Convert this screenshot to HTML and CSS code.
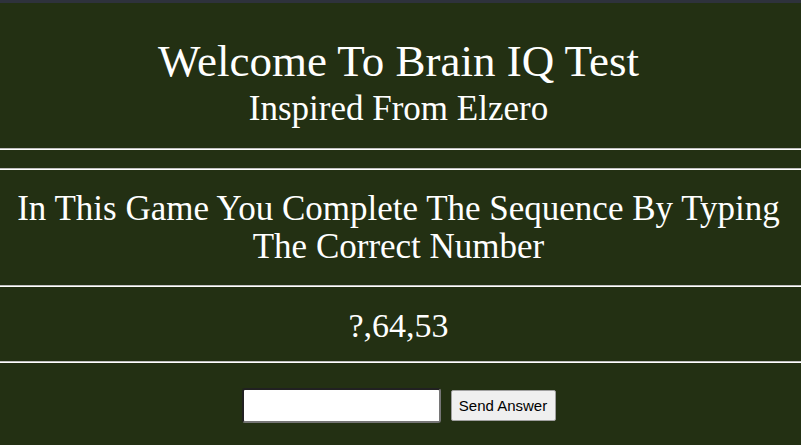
FILE: index.html
```html
<!DOCTYPE html>
<html>
<head>
<meta charset="utf-8">
<title>Brain IQ Test</title>
<link rel="stylesheet" href="styles.css">
</head>
<body>
<div class="page">
  <header class="head">
    <h1 class="title">Welcome To Brain IQ Test</h1>
    <p class="subtitle">Inspired From Elzero</p>
  </header>
  <div class="spacer"></div>
  <section class="intro">
    <p>In This Game You Complete The Sequence By Typing The Correct Number</p>
  </section>
  <section class="seq">
    <p>?,64,53</p>
  </section>
  <form class="answer">
    <input class="field" type="text">
    <button class="send" type="button">Send Answer</button>
  </form>
</div>
</body>
</html>
```
FILE: styles.css
```css
html, body {
  margin: 0;
  padding: 0;
}
body {
  background: #233013;
  border-top: 3px solid #2e323c;
  font-family: "Liberation Serif", "Times New Roman", serif;
  color: #fff;
}
.page {
  text-align: center;
}
.head, .spacer, .intro, .seq {
  border-bottom: 1px solid #fff;
  box-shadow: 0 -1px 0 #bfbfbf inset;
}
.head {
  padding: 33px 4px 20px 0;
}
.title {
  margin: 0;
  font-size: 45px;
  font-weight: normal;
  line-height: 51px;
}
.subtitle {
  margin: 2px 0 0;
  font-size: 35px;
  line-height: 40px;
}
.spacer {
  height: 19px;
}
.intro {
  padding: 20px 12px 20px 8px;
}
.intro p {
  margin: 0;
  font-size: 35px;
  line-height: 38px;
}
.seq {
  padding: 19px 4px 16px 0;
}
.seq p {
  margin: 0;
  font-size: 34px;
  line-height: 40px;
}
.answer {
  display: flex;
  justify-content: center;
  align-items: center;
  gap: 10px;
  padding: 25px 4px 20px 0;
}
.field {
  box-sizing: border-box;
  width: 199px;
  height: 35px;
  border: 2px inset #767676;
  border-radius: 3px;
  background: #fff;
  margin: 0;
}
.send {
  box-sizing: border-box;
  width: 105px;
  height: 31px;
  font-family: "Liberation Sans", Arial, sans-serif;
  font-size: 15px;
  color: #000;
  background: #efefef;
  border: 1px solid #a0a0a0;
  border-radius: 2px;
  padding: 0 6px;
  margin: 0;
}
```
